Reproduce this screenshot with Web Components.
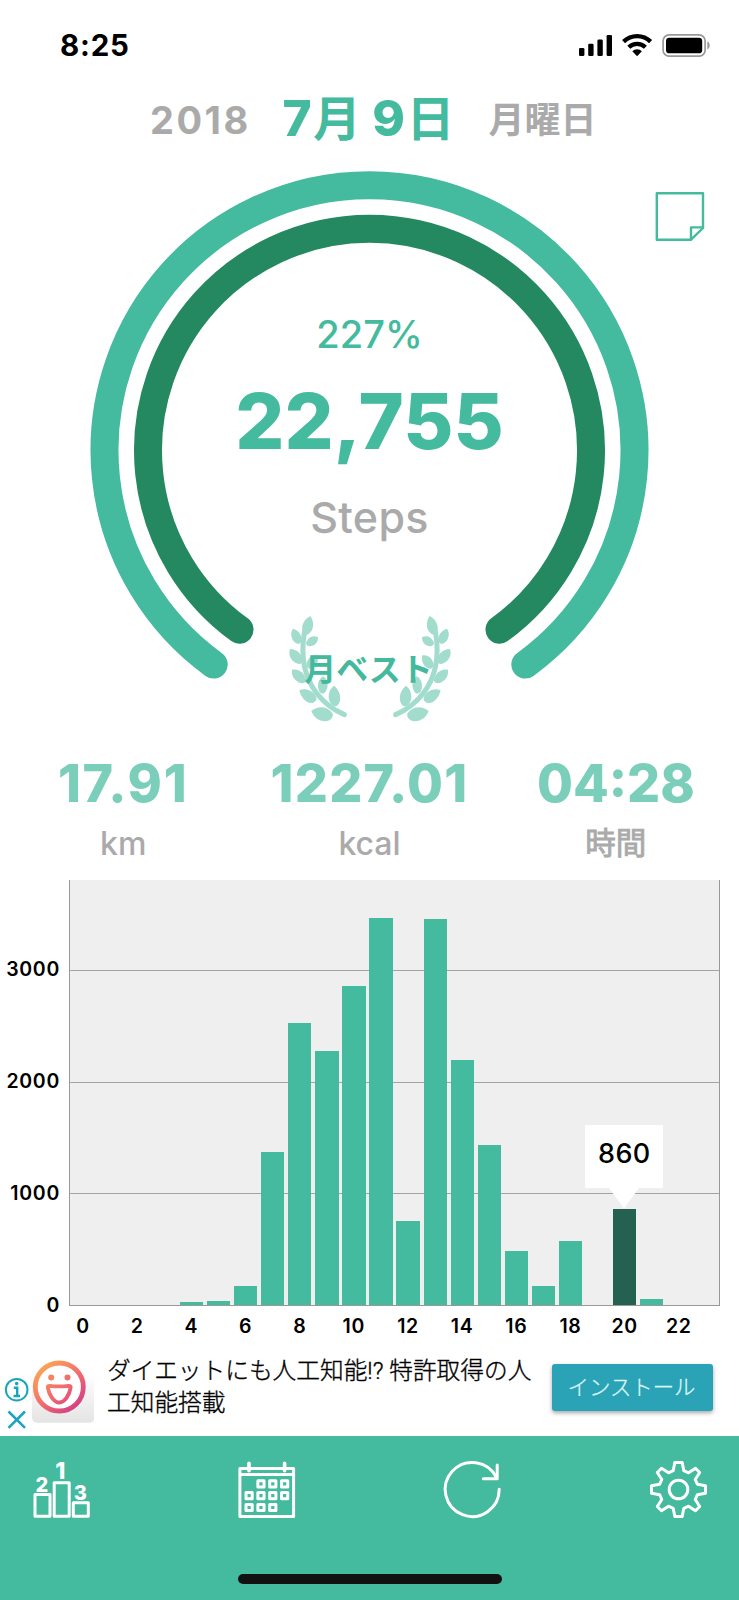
<!DOCTYPE html>
<html lang="ja">
<head>
<meta charset="utf-8">
<title>Steps</title>
<style>
  body { margin: 0; background: #fff; }
</style>
</head>
<body>
<steps-app></steps-app>
<script>
const define = (name, html, setup) => {
  const tpl = document.createElement('template');
  tpl.innerHTML = html;
  customElements.define(name, class extends HTMLElement {
    constructor() {
      super();
      this.attachShadow({ mode: 'open' }).append(tpl.content.cloneNode(true));
    }
    connectedCallback() { if (setup) setup(this, this.shadowRoot); }
  });
};

define('status-bar', `
<style>
  :host { display: flex; justify-content: space-between; align-items: center; height: 90px; box-sizing: border-box;
    padding: 0 28px 0 60px; color: #000; }
  .time { font-size: 29.500px; font-weight: 750; line-height: 36px; letter-spacing: .8px; }
  svg { display: block; }
</style>
<span class="time">8:25</span>
<svg width="134" height="24" viewBox="577 33 134 24">
  <rect x="579" y="48" width="5.4" height="8" rx="1.3"/>
  <rect x="588.2" y="43.8" width="5.4" height="12.2" rx="1.3"/>
  <rect x="597.4" y="39.6" width="5.4" height="16.4" rx="1.3"/>
  <rect x="606.6" y="35" width="5.4" height="21" rx="1.3"/>
  <g fill="none" stroke="#000" stroke-width="4.3">
    <path d="M623.6 41.6a19.3 19.3 0 0 1 27 0"/>
    <path d="M628.8 47.2a12 12 0 0 1 16.6 0"/>
  </g>
  <path d="M632.3 51.2a7 7 0 0 1 9.6 0l-4.8 5z"/>
  <rect x="663.1" y="34.8" width="42" height="21.4" rx="6" fill="none" stroke="#999" stroke-width="1.7"/>
  <rect x="666" y="37.7" width="36.2" height="15.6" rx="3.4"/>
  <path d="M707.3 41.5c3.2 1 3.2 6.800 0 7.900z" fill="#999"/>
</svg>`);

define('date-header', `
<style>
  :host { display: flex; align-items: flex-start; height: 60px; padding-left: 150px; white-space: nowrap; font-weight: 700; }
  .year { width: 132.500px; color: #aaa; font-size: 38px; font-weight: 750; line-height: 61px; letter-spacing: 2.500px; }
  .date { width: 206px; color: #44ba9e; font-size: 49.5px; line-height: 57px; font-weight: 800; letter-spacing: .3px; }
  .date i { font-style: normal; font-size: 48px; font-weight: 700; position: relative; top: -.500px; margin-left: 1px; }
  .day { color: #aaa; font-size: 36px; line-height: 61px; font-weight: 700; }
</style>
<span class="year">2018</span>
<span class="date">7<i>月</i> 9<i>日</i></span>
<span class="day">月曜日</span>`);

define('laurel-badge', `
<style>
  :host { display: grid; width: 200px; height: 140px; place-items: center; }
  svg, span { grid-area: 1 / 1; }
  svg { display: block; }
  span { color: #44b99d; font-size: 32px; font-weight: 600; line-height: 40px; white-space: nowrap; margin-top: 0; margin-left: -2px; }
</style>
<svg width="200" height="140" viewBox="0 0 600 420" fill="#a2dccd">
  <defs>
    <g id="branch">
      <path d="M103 98 C93 160 98 225 140 280 C165 312 190 330 223 344" fill="none" stroke="#a2dccd" stroke-width="15" stroke-linecap="round"/>
      <path d="M121 48 C131 60 133 85 121 97 C115 104 108 106 100 104 C92 85 97 60 121 48z"/>
      <path d="M69 86 C86 90 96 105 94 122 C93 130 86 134 79 130 C65 122 58 102 69 86z"/>
      <path d="M144 112 C144 128 134 139 119 139 C110 139 106 132 110 124 C117 111 130 105 144 112z"/>
      <path d="M60 147 C82 147 96 162 97 182 C97 191 89 194 80 190 C63 183 54 165 60 147z"/>
      <path d="M143 166 C147 182 140 199 126 205 C116 209 109 203 110 192 C112 174 126 163 143 166z"/>
      <path d="M66 209 C87 205 103 219 108 238 C110 247 103 251 93 249 C76 245 63 228 66 209z"/>
      <path d="M160 229 C174 239 177 262 166 276 C158 285 149 280 146 270 C141 253 146 237 160 229z"/>
      <path d="M88 271 C106 262 129 271 138 290 C142 299 136 307 126 309 C109 311 93 293 88 271z"/>
      <path d="M192 257 C209 271 216 293 206 312 C199 323 187 319 181 309 C171 291 176 269 192 257z"/>
      <path d="M124 333 C143 316 172 318 187 339 C192 349 184 360 172 363 C151 367 132 354 124 333z"/>
    </g>
  </defs>
  <use href="#branch"/>
  <use href="#branch" transform="matrix(-1 0 0 1 600 0)"/>
</svg>
<span>月ベスト</span>`);

define('step-gauge', `
<style>
  :host { display: grid; height: 595px; }
  svg.ring, .stack { grid-area: 1 / 1; }
  svg.ring { display: block; }
  .stack { display: flex; flex-direction: column; align-items: center; padding-top: 160px; color: #44ba9e; }
  .pct { font-size: 38px; line-height: 48px; font-weight: 530; letter-spacing: .1px; }
  .num { font-size: 77px; line-height: 90px; font-weight: 800; margin-top: 17.500px; letter-spacing: .1px; }
  .unit { font-size: 43px; line-height: 60px; font-weight: 550; letter-spacing: .3px; margin: 21px 0 53.5px; color: #aaa; }
</style>
<svg class="ring" width="739" height="595" viewBox="0 150 739 595" fill="none" stroke-linecap="round">
  <path d="M213.700 664.600A265 265 0 1 1 525.300 664.600" stroke="#44ba9e" stroke-width="28"/>
  <path d="M239.500 629.700A221.500 221.500 0 1 1 499.500 629.700" stroke="#248961" stroke-width="28"/>
  <g stroke="#44ba9e" stroke-width="2.400" stroke-linejoin="round">
    <path d="M656.800 193.200H703V228L691 239.700H656.800Z"/>
    <path d="M703 227.400H691V239.400"/>
  </g>
</svg>
<div class="stack">
  <div class="pct">227%</div>
  <div class="num">22,755</div>
  <div class="unit">Steps</div>
  <laurel-badge></laurel-badge>
</div>`);

define('stat-item', `
<style>
  :host { display: flex; flex-direction: column; align-items: center; gap: 9.5px; }
  .value { color: #7bcfba; font-size: 52px; font-weight: 800; line-height: 60px; letter-spacing: var(--tracking, 0); }
  .label { color: #aaa; font-size: 32px; font-weight: 530; line-height: 40px; }
  ::slotted([lang]) { font-size: 30.500px; font-weight: 400; -webkit-text-stroke: .9px #aaa; position: relative; top: -1px; }
</style>
<div class="value"><slot name="value"></slot></div>
<div class="label"><slot></slot></div>`);

define('stat-row', `
<style>
  :host { display: grid; grid-template-columns: repeat(3, 1fr); height: 134.5px; box-sizing: border-box; padding-top: 9px; }
  ::slotted(:nth-child(1)) { --tracking: 1.700px; }
  ::slotted(:nth-child(2)) { --tracking: 1.300px; }
</style>
<slot></slot>`);

define('hour-chart', `
<style>
  :host { display: grid; grid-template-columns: 69px 651px; grid-template-rows: 426px 43.500px; height: 469.500px; }
  .y { display: flex; flex-direction: column; align-items: flex-end; justify-content: space-between;
    padding: 79px 9px 0 0; margin-bottom: -9px; }
  .y span, .x span { font-size: 19.5px; line-height: 20px; font-weight: 560; letter-spacing: .7px; color: #000; }
  .plot { display: grid; grid-template-columns: repeat(24, 1fr); align-items: end; box-sizing: border-box;
    border: solid #999; border-width: 0 1.300px 1.300px;
    background:
      linear-gradient(#a3a3a3, #a3a3a3) 0 90px / 100% 1.300px no-repeat,
      linear-gradient(#a3a3a3, #a3a3a3) 0 202px / 100% 1.300px no-repeat,
      linear-gradient(#a3a3a3, #a3a3a3) 0 313.500px / 100% 1.300px no-repeat,
      #efefef; }
  .bar { margin: 0 1.900px 0 2px; background: #44ba9e; position: relative; }
  .bar.on { background: #246150; }
  .tip { position: absolute; left: 50%; bottom: 100%; width: 78px; height: 84px; transform: translateX(-50%); }
  .tip svg { position: absolute; inset: 0; }
  .tip b { position: relative; display: block; text-align: center; font-size: 27px; line-height: 58px; font-weight: 540; letter-spacing: .4px; }
  .x { grid-column: 2; display: grid; grid-template-columns: repeat(12, 54.160px); padding: 10px 0 0 .600px; }
  .x span { width: 27px; display: flex; justify-content: center; }
</style>
<div class="y"><span>3000</span><span>2000</span><span>1000</span><span>0</span></div>
<div class="plot"></div>
<div class="x"></div>`, (host, root) => {
  const heights = host.getAttribute('heights').split(',').map(Number);
  const selected = Number(host.getAttribute('selected'));
  root.querySelector('.plot').innerHTML = heights.map((h, i) =>
    `<div class="bar${i === selected ? ' on' : ''}" style="height:${h}px">${i === selected
      ? `<div class="tip"><svg width="78" height="84" viewBox="0 0 78 84" fill="#fff"><path d="M0 0H78V63H54L39 83.500L24 63H0Z"/></svg><b>${host.getAttribute('value')}</b></div>` : ''}</div>`).join('');
  root.querySelector('.x').innerHTML = Array.from({ length: 12 }, (_, i) => `<span>${i * 2}</span>`).join('');
});

define('ad-banner', `
<style>
  :host { display: flex; align-items: flex-start; height: 87px; white-space: nowrap; background: #fff; }
  svg { display: block; flex: none; }
  p { margin: 7px 0 0 13px; width: 445px; color: #000; font: 300 23.7px/31.700px Roboto, "Noto Sans CJK JP", sans-serif;
    -webkit-text-stroke: .35px #000; }
  .cta { margin-top: 14.700px; width: 161px; height: 47px; border-radius: 3px; background: #29a3b5; color: #dcf5f5;
    font: 300 21.400px/44px "Noto Sans CJK JP", sans-serif; text-align: center; box-shadow: 0 2px 4px rgba(0,0,0,.35);
    text-indent: -2px; -webkit-text-stroke: .3px #dcf5f5; }
</style>
<svg width="94" height="87" viewBox="0 1349 94 87" fill="none">
  <defs>
    <linearGradient id="tile" x1="0" y1="0" x2="0" y2="1"><stop offset=".2" stop-color="#fff"/><stop offset="1" stop-color="#e4e4e4"/></linearGradient>
    <linearGradient id="face" x1="42" y1="1366" x2="76" y2="1408" gradientUnits="userSpaceOnUse"><stop stop-color="#faa455"/><stop offset=".5" stop-color="#f4706b"/><stop offset="1" stop-color="#d54084"/></linearGradient>
  </defs>
  <rect x="32" y="1361" width="62.500" height="61.700" rx="5" fill="url(#tile)"/>
  <circle cx="59.300" cy="1387" r="24" fill="#fff" stroke="url(#face)" stroke-width="4.800"/>
  <circle cx="51.200" cy="1377.500" r="3" fill="#f68361"/>
  <circle cx="67.500" cy="1377.500" r="3" fill="#f0706c"/>
  <path d="M47.800 1387.500C47.500 1386.300 48.500 1385.800 50 1385.900C56 1386.600 62 1386.600 68.500 1385.900C70 1385.800 71 1386.400 70.600 1387.800C69.500 1395 64.500 1402.500 59.300 1402.500C54 1402.500 49 1395 47.800 1387.500Z" stroke="url(#face)" stroke-width="3.900" stroke-linejoin="round"/>
  <g stroke="#1aa5bf">
    <circle cx="16.700" cy="1389.700" r="10.800" stroke-width="2"/>
    <path d="M13.800 1387.800H17.200V1396M13.500 1396H20" stroke-width="2.400"/>
    <circle cx="16.700" cy="1383.600" r="1.100" stroke-width="1.400" fill="#1aa5bf"/>
    <path d="M8.500 1411.500L25 1427.800M25 1411.500L8.500 1427.800" stroke-width="2.500"/>
  </g>
</svg>
<p>ダイエットにも人工知能!? 特許取得の人<br>工知能搭載</p>
<div class="cta">インストール</div>`);

define('tab-bar', `
<style>
  :host { display: flex; flex-direction: column; align-items: center; justify-content: space-between; height: 164px;
    box-sizing: border-box; padding: 25px 32px 16px 33px; background: #44ba9e; }
  nav { display: flex; justify-content: space-between; width: 100%; }
  svg { display: block; fill: none; stroke: #fff; stroke-width: 3; stroke-linejoin: round; stroke-linecap: round; overflow: visible; }
  text { fill: #fff; stroke: none; font-family: Inter, sans-serif; font-weight: 800; text-anchor: middle; }
  .home { width: 264px; height: 10px; border-radius: 5px; background: #111; }
</style>
<nav>
  <svg width="57" height="57" viewBox="0 0 57 57">
    <rect x="2" y="33.600" width="15" height="21.700"/><rect x="21.200" y="21.700" width="15" height="33.600"/><rect x="40.300" y="41.700" width="15" height="13.600"/>
    <text x="9" y="30.600" font-size="20">2</text><text x="27.300" y="18" font-size="23">1</text><text x="47.300" y="38.700" font-size="20">3</text>
  </svg>
  <svg width="57" height="57" viewBox="0.600 0 57 57">
    <path d="M1.500 7.500H55.200V55.500H1.500ZM1.500 13.500H55.200"/>
    <path d="M10.600 2.200V9.800M46.200 2.200V9.800" stroke-width="3.600"/>
    <g class="days"></g>
  </svg>
  <svg width="57" height="57" viewBox="0 0 57 57">
    <path d="M55.200 28.300A27 27 0 1 1 52.400 16.500"/><path d="M53.200 4V17.700H39.300"/>
  </svg>
  <svg width="57" height="57" viewBox="-28.500 -28.500 57 57">
    <circle r="9.300"/>
    <path d="M-3.700 -27L3.700 -27L5.300 -18.800L10 -16.700L17 -21.200L21.200 -17L16.700 -10L18.800 -5.300L27 -3.700L27 3.700L18.800 5.300L16.700 10L21.200 17L17 21.200L10 16.700L5.300 18.800L3.700 27L-3.700 27L-5.300 18.800L-10 16.700L-17 21.200L-21.200 17L-16.700 10L-18.800 5.300L-27 3.700L-27 -3.700L-18.800 -5.300L-16.700 -10L-21.200 -17L-17 -21.200L-10 -16.700L-5.300 -18.800Z"/>
  </svg>
</nav>
<div class="home"></div>`, (host, root) => {
  const rows = [[1, 2, 3], [0, 1, 2, 3], [0, 1, 2]];
  root.querySelector('.days').innerHTML = rows.map((cols, r) => cols.map(c =>
    `<rect x="${7.600 + c * 11.850}" y="${19.700 + r * 11.850}" width="6.200" height="6.200"/>`).join('')).join('');
});

define('steps-app', `
<style>
  :host { display: flex; flex-direction: column; width: 739px; height: 1600px; overflow: hidden; background: #fff;
    font-family: Inter, "Noto Sans CJK JP", sans-serif; }
</style>
<status-bar></status-bar>
<date-header></date-header>
<step-gauge></step-gauge>
<stat-row>
  <stat-item><span slot="value">17.91</span>km</stat-item>
  <stat-item><span slot="value">1227.01</span>kcal</stat-item>
  <stat-item><span slot="value">04:28</span><span lang="ja">時間</span></stat-item>
</stat-row>
<hour-chart selected="20" value="860"
  heights="0,0,0,0,3,4,19,152.500,281.500,253.500,319,386.500,83.500,385.500,244.500,160,53.500,18.500,64,0,96,6,0,0"></hour-chart>
<ad-banner></ad-banner>
<tab-bar></tab-bar>`);
</script>
</body>
</html>
